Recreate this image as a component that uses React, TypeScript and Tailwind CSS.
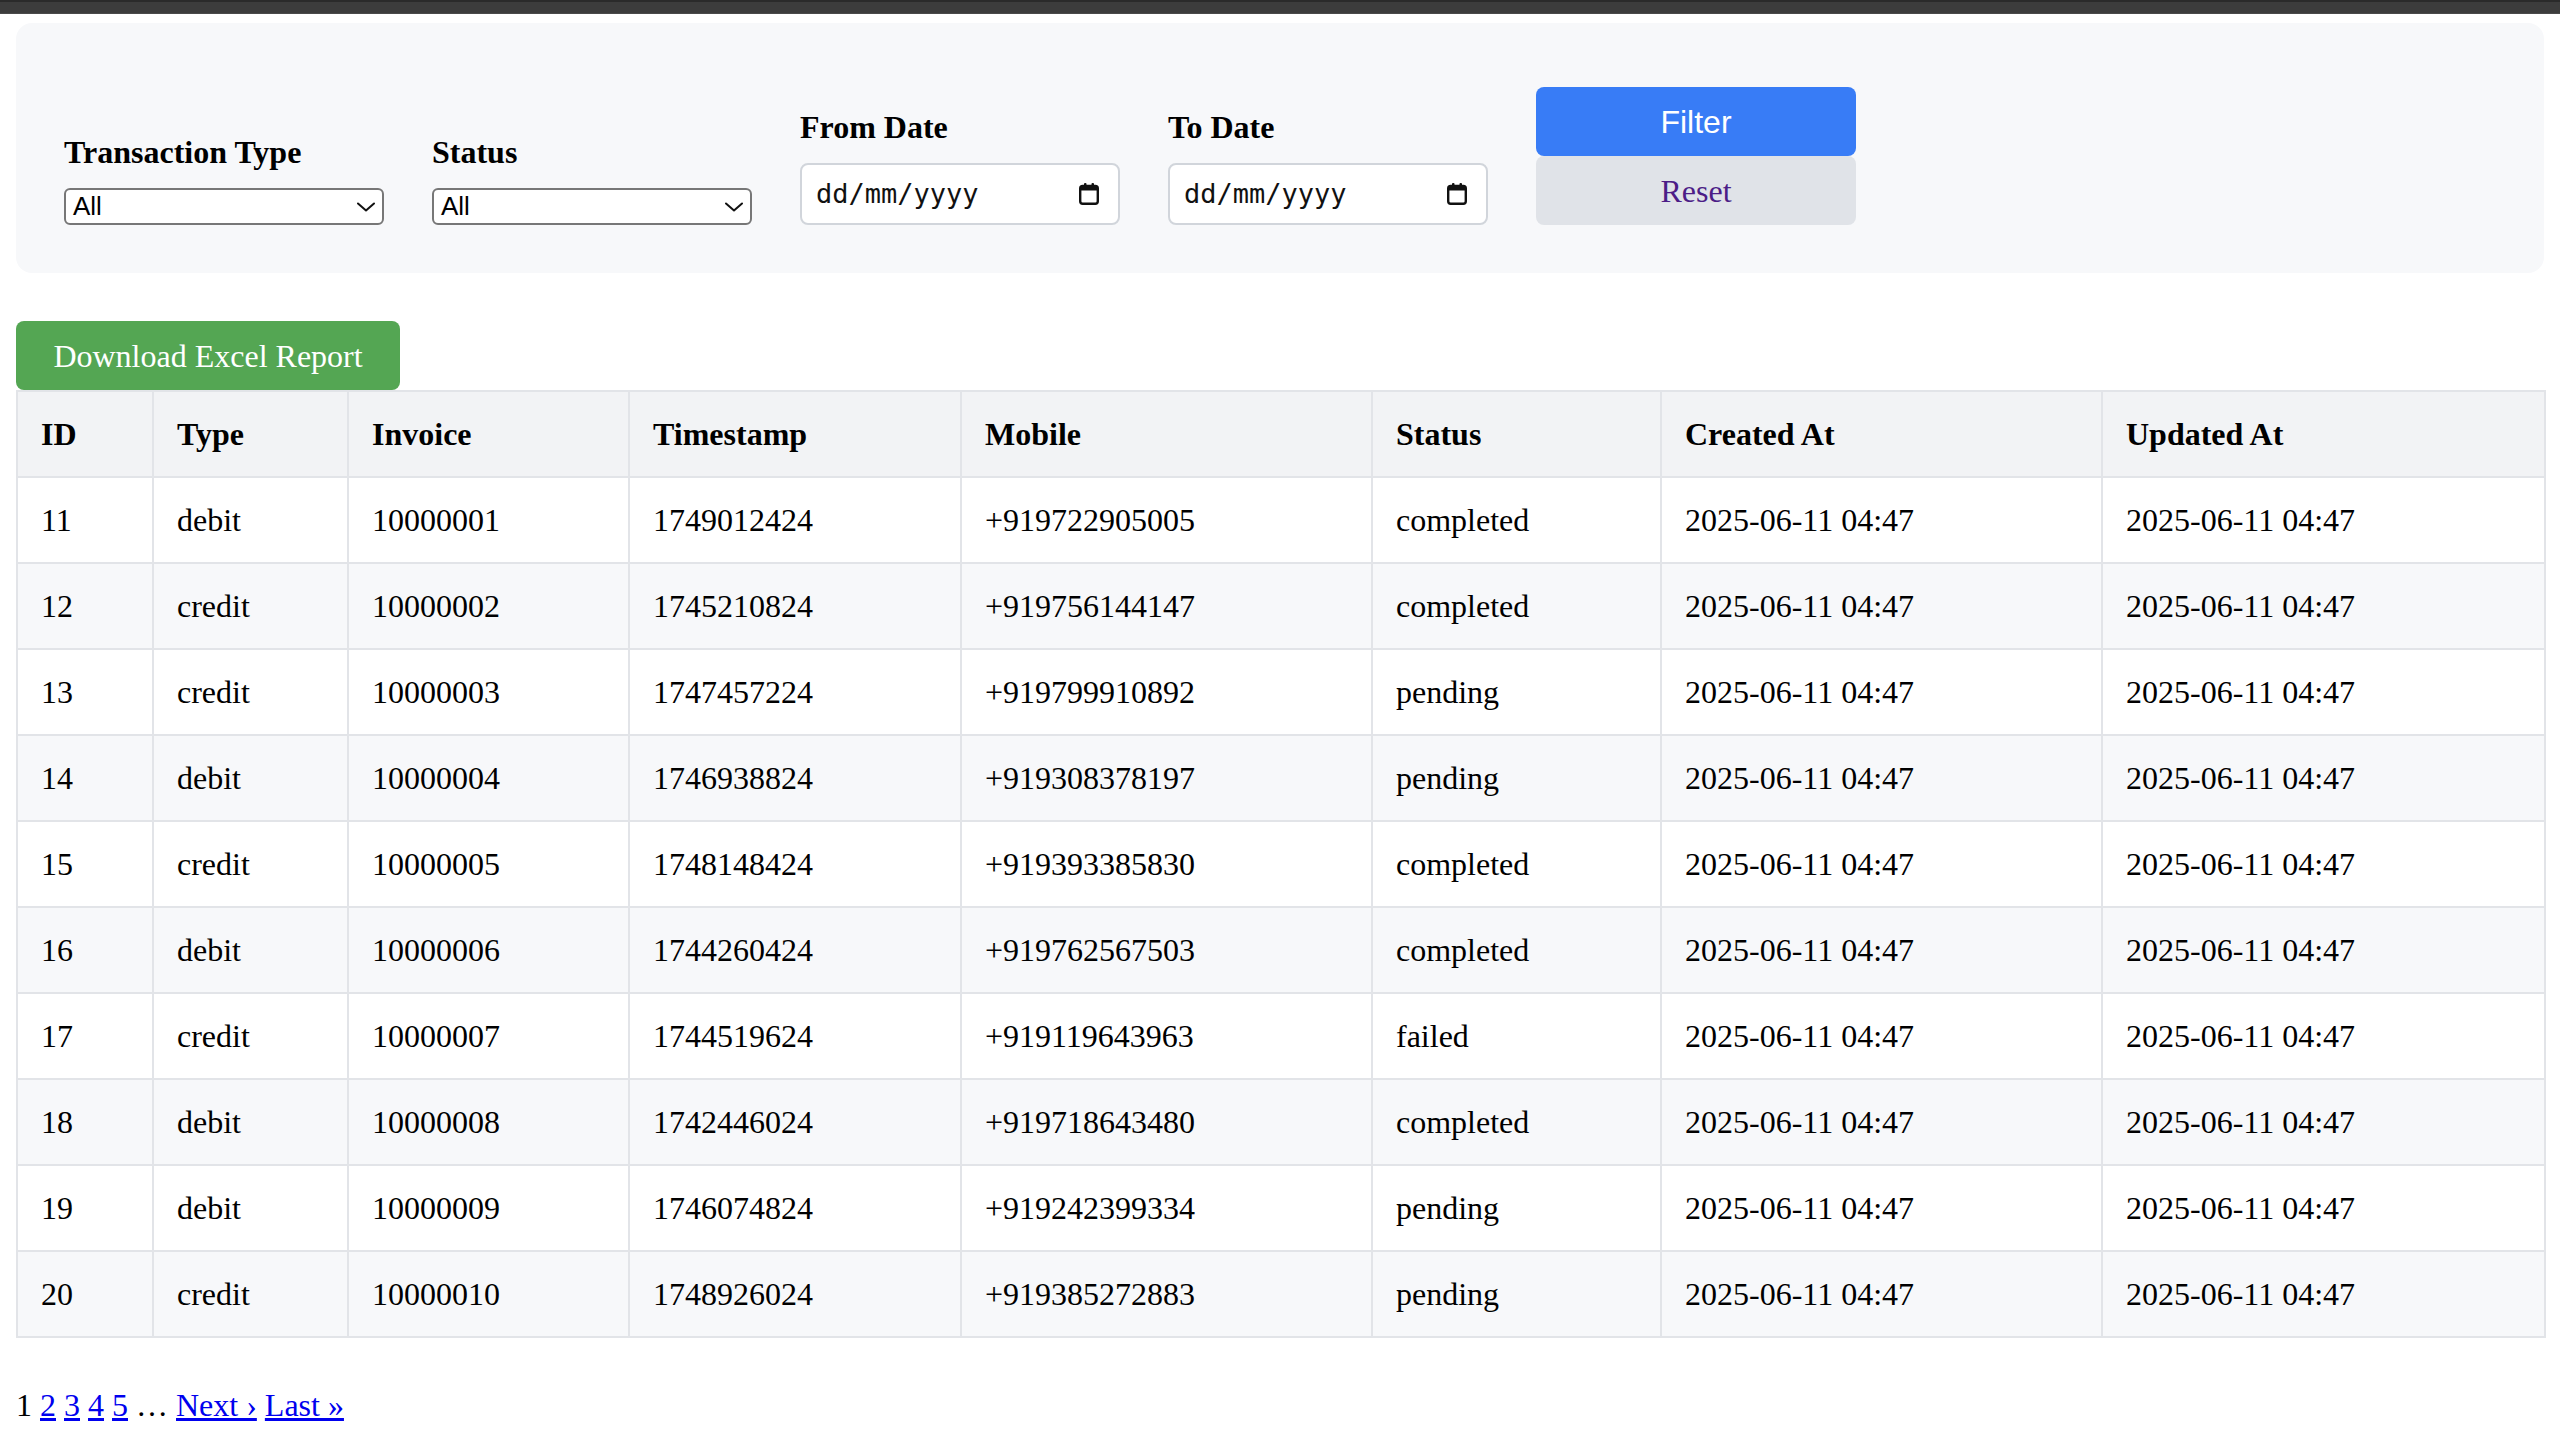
import React from "react";

type Txn = {
  id: number;
  type: string;
  invoice: string;
  timestamp: string;
  mobile: string;
  status: string;
};

const ROWS: Txn[] = [
  { id: 11, type: "debit", invoice: "10000001", timestamp: "1749012424", mobile: "+919722905005", status: "completed" },
  { id: 12, type: "credit", invoice: "10000002", timestamp: "1745210824", mobile: "+919756144147", status: "completed" },
  { id: 13, type: "credit", invoice: "10000003", timestamp: "1747457224", mobile: "+919799910892", status: "pending" },
  { id: 14, type: "debit", invoice: "10000004", timestamp: "1746938824", mobile: "+919308378197", status: "pending" },
  { id: 15, type: "credit", invoice: "10000005", timestamp: "1748148424", mobile: "+919393385830", status: "completed" },
  { id: 16, type: "debit", invoice: "10000006", timestamp: "1744260424", mobile: "+919762567503", status: "completed" },
  { id: 17, type: "credit", invoice: "10000007", timestamp: "1744519624", mobile: "+919119643963", status: "failed" },
  { id: 18, type: "debit", invoice: "10000008", timestamp: "1742446024", mobile: "+919718643480", status: "completed" },
  { id: 19, type: "debit", invoice: "10000009", timestamp: "1746074824", mobile: "+919242399334", status: "pending" },
  { id: 20, type: "credit", invoice: "10000010", timestamp: "1748926024", mobile: "+919385272883", status: "pending" },
];

const STAMP = "2025-06-11 04:47";

const SelectBox = ({ label }: { label: string }) => (
  <div className="flex flex-col">
    <div className="text-[32px] leading-[37px] font-bold mb-[17px]">{label}</div>
    <div className="w-[320px] h-[37px] bg-white border-2 border-[#777] rounded-[6px] flex items-center justify-between pl-[7px] pr-[7px] font-['Liberation_Sans',Arial,sans-serif] text-[26px]">
      <span>All</span>
      <svg width="18" height="10" viewBox="0 0 18 10" fill="none">
        <path d="M1 1.5l8 7 8-7" stroke="#111" strokeWidth="2" strokeLinecap="round" strokeLinejoin="round" />
      </svg>
    </div>
  </div>
);

const CalendarIcon = () => (
  <svg width="20" height="22" viewBox="0 0 20 22" fill="none">
    <rect x="5" y="0" width="2.5" height="4" rx="1" fill="#111" />
    <rect x="12.5" y="0" width="2.5" height="4" rx="1" fill="#111" />
    <rect x="1.2" y="3" width="17.6" height="17.8" rx="2.5" stroke="#111" strokeWidth="2.4" />
    <rect x="1.2" y="3" width="17.6" height="4.5" fill="#111" />
  </svg>
);

const DateBox = ({ label }: { label: string }) => (
  <div className="flex flex-col">
    <div className="text-[32px] leading-[37px] font-bold mb-[17px]">{label}</div>
    <div className="w-[320px] h-[62px] bg-white border-2 border-[#d1d5db] rounded-[8px] flex items-center justify-between pl-[14px] pr-[19px]">
      <span className="font-['DejaVu_Sans_Mono',monospace] text-[27px] text-[#111]">dd/mm/yyyy</span>
      <CalendarIcon />
    </div>
  </div>
);

const COLS = [
  { name: "ID", w: "w-[136px]" },
  { name: "Type", w: "w-[195px]" },
  { name: "Invoice", w: "w-[281px]" },
  { name: "Timestamp", w: "w-[332px]" },
  { name: "Mobile", w: "w-[411px]" },
  { name: "Status", w: "w-[289px]" },
  { name: "Created At", w: "w-[441px]" },
  { name: "Updated At", w: "w-[443px]" },
];

export default function App() {
  return (
    <div className="min-h-screen bg-white text-black font-['Liberation_Serif','Times_New_Roman',serif]">
      <div className="h-[14px] bg-[#3c3c3c] border-t-2 border-[#2a2a2a] border-b border-b-[#4a4a4a]" />
      <div className="px-[16px] pt-[9px]">
        <div className="bg-[#f7f8fa] rounded-[16px] pl-[48px] pr-[48px] pt-[64px] pb-[48px] flex items-end gap-[48px]">
          <SelectBox label="Transaction Type" />
          <SelectBox label="Status" />
          <DateBox label="From Date" />
          <DateBox label="To Date" />
          <div className="flex flex-col w-[320px]">
            <button className="h-[69px] bg-[#387cf6] rounded-[8px] text-white text-[32px] font-['Liberation_Sans',Arial,sans-serif]">
              Filter
            </button>
            <button className="h-[69px] bg-[#e0e3e8] rounded-[8px] text-[#4c1d87] text-[32px]">
              Reset
            </button>
          </div>
        </div>

        <button className="mt-[48px] w-[384px] h-[69px] bg-[#54a653] rounded-[8px] text-white text-[32px] block">
          Download Excel Report
        </button>

        <table className="w-full table-fixed border-collapse text-[32px]">
          <thead>
            <tr className="bg-[#f2f3f5]">
              {COLS.map((c) => (
                <th
                  key={c.name}
                  className={`${c.w} border-2 border-[#e2e4e8] text-left font-bold px-[23px] py-[24px] leading-[36px]`}
                >
                  {c.name}
                </th>
              ))}
            </tr>
          </thead>
          <tbody>
            {ROWS.map((r, i) => (
              <tr key={r.id} className={i % 2 === 1 ? "bg-[#f7f8fa]" : "bg-white"}>
                {[String(r.id), r.type, r.invoice, r.timestamp, r.mobile, r.status, STAMP, STAMP].map((v, j) => (
                  <td key={j} className="border-2 border-[#e2e4e8] px-[23px] py-[24px] leading-[36px]">
                    {v}
                  </td>
                ))}
              </tr>
            ))}
          </tbody>
        </table>

        <div className="mt-[49px] text-[32px] leading-[37px]">
          <span>1 </span>
          <a href="#" className="text-[#0000ee] underline">2</a>{" "}
          <a href="#" className="text-[#0000ee] underline">3</a>{" "}
          <a href="#" className="text-[#0000ee] underline">4</a>{" "}
          <a href="#" className="text-[#0000ee] underline">5</a>
          <span> … </span>
          <a href="#" className="text-[#0000ee] underline">Next ›</a>{" "}
          <a href="#" className="text-[#0000ee] underline">Last »</a>
        </div>
      </div>
    </div>
  );
}
